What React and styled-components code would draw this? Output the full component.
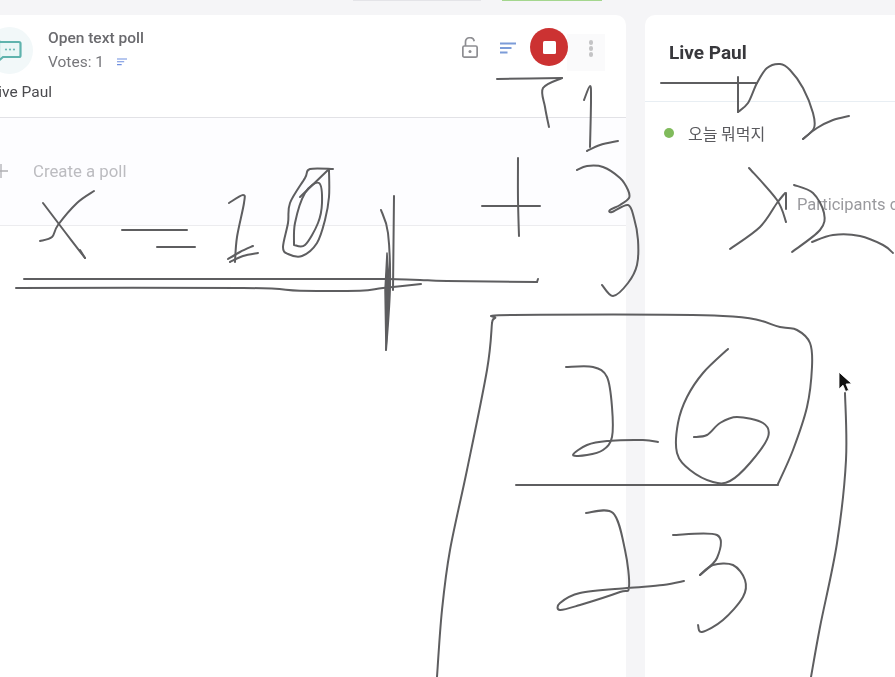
import React from "react";
import styled, { createGlobalStyle } from "styled-components";

const Global = createGlobalStyle`
  html, body { margin: 0; padding: 0; height: 100%; background: #f5f5f7; overflow: hidden; }
  body { font-family: Roboto, "Noto Sans CJK KR", sans-serif; font-size: 15.5px; }
  #root { height: 100%; }
`;

const Page = styled.div`
  position: relative; width: 895px; height: 677px; overflow: hidden; filter: blur(0.35px);
  background: #f5f5f7; display: flex; flex-direction: column;
`;
const TopStrip = styled.div`
  flex: 0 0 15px; display: flex; align-items: flex-start; padding-left: 353px; gap: 21px;
`;
const StripTab = styled.div`
  width: ${p => p.$w}px; height: 1px; background: ${p => p.$c};
`;
const Columns = styled.div`
  flex: 1; display: flex; gap: 19px; margin-left: -30px; width: 1100px; min-height: 0;
`;
const PollPanel = styled.section`
  flex: 0 0 656px; background: #fff; border-radius: 10px 10px 0 0; display: flex; flex-direction: column;
`;
const PollHead = styled.header`
  flex: 0 0 103px; box-sizing: border-box; border-bottom: 1px solid #e2e2e6; padding: 12px 21px 0 16px;
  display: flex; flex-direction: column;
`;
const PollTop = styled.div`
  display: flex; align-items: flex-start; height: 56px;
`;
const Avatar = styled.div`
  flex: 0 0 47px; height: 47px; border-radius: 50%; background: #f2f8f9;
  display: flex; align-items: center; justify-content: center; margin-right: 15px;
`;
const PollInfo = styled.div`
  flex: 1; display: flex; flex-direction: column; gap: 6px; padding-top: 2px;
`;
const PollTitle = styled.div`
  font-weight: 500; color: #6a6a6e; line-height: 18px;
`;
const Votes = styled.div`
  display: flex; align-items: center; gap: 13px; color: #77777b; line-height: 18px;
`;
const Actions = styled.div`
  display: flex; align-items: flex-start; margin-top: 1px;
`;
const LockSlot = styled.span`
  display: flex; margin-right: 22px; margin-top: 9px;
`;
const SortSlot = styled.span`
  display: flex; margin-right: 14px; margin-top: 14px;
`;
const StopButton = styled.button`
  position: relative; z-index: 1; width: 38px; height: 38px; border: 0; padding: 0; border-radius: 50%;
  background: #cc3232; display: flex; align-items: center; justify-content: center;
`;
const StopMark = styled.i`
  display: block; width: 13px; height: 13px; background: #fff; border-radius: 1.5px;
`;
const MoreButton = styled.button`
  width: 38px; height: 37px; margin-left: -1px; margin-top: 6px; border: 0; background: #fafafb; padding: 0 12px 8px 0;
  display: flex; flex-direction: column; align-items: flex-end; justify-content: center; gap: 1.5px;
`;
const Dot3 = styled.i`
  display: block; width: 4.500px; height: 4.500px; border-radius: 50%; background: #c4c4c6;
`;
const PollName = styled.div`
  color: #4a4a4e; line-height: 18px; margin-left: 4px;
`;
const CreateRow = styled.div`
  flex: 0 0 108px; box-sizing: border-box; background: #fdfdff; border-bottom: 1px solid #ececef;
  display: flex; align-items: center; padding: 0 0 2px 24px; gap: 25px; color: #bcbcc0; font-size: 16.800px;
`;
const ParticipantsPanel = styled.section`
  flex: 0 0 400px; background: #fff; border-radius: 10px 10px 0 0; display: flex; flex-direction: column;
`;
const PanelHead = styled.header`
  flex: 0 0 87px; box-sizing: border-box; border-bottom: 1px solid #e8eef3; padding: 27px 24px 0;
  font-size: 19px; line-height: 22px; font-weight: 700; color: #38383c;
`;
const StatusRow = styled.div`
  display: flex; align-items: center; gap: 14px; padding: 22px 0 0 19px; color: #5a5a5e; line-height: 18px;
  font-family: "Noto Sans CJK KR", Roboto, sans-serif; font-size: 16px;
`;
const StatusDot = styled.i`
  display: block; width: 10px; height: 10px; border-radius: 50%; background: #80bb5c;
`;
const Hint = styled.div`
  margin: 54px 0 0 152px; color: #9a9a9e; line-height: 18px; white-space: nowrap; font-size: 16.500px;
`;
const Sketch = styled.svg`
  position: absolute; left: 0; top: 0; width: 895px; height: 677px; pointer-events: none; z-index: 2;
`;

const smooth = pts => {
  let d = `M${pts[0][0]} ${pts[0][1]}`;
  for (let i = 0; i < pts.length - 1; i++) {
    const p0 = pts[i - 1] || pts[i], p1 = pts[i], p2 = pts[i + 1], p3 = pts[i + 2] || p2;
    const c1 = [p1[0] + (p2[0] - p0[0]) / 6, p1[1] + (p2[1] - p0[1]) / 6];
    const c2 = [p2[0] - (p3[0] - p1[0]) / 6, p2[1] - (p3[1] - p1[1]) / 6];
    d += `C${c1[0].toFixed(1)} ${c1[1].toFixed(1)} ${c2[0].toFixed(1)} ${c2[1].toFixed(1)} ${p2[0]} ${p2[1]}`;
  }
  return d;
};

const strokes = [
  [[497,79],[562,78]],
  [[562,78],[543,88],[545,107],[549,127]],
  [[584,100],[590,86],[591,100],[590,147]],
  [[587,151],[600,145],[618,141]],
  [[577,170],[587,166],[603,167],[620,178],[628,190],[629,198],[620,205],[610,210],[612,212],[628,205],[634,218],[638,240],[637,265],[628,283],[613,296],[602,285]],
  [[518,158],[518,200],[519,236]],
  [[482,206],[540,206]],
  [[24,279],[387,279]],
  [[387,279],[420,280],[447,281],[537,282]],
  [[537,282],[538,279]],
  [[16,288],[243,288],[300,290.7],[360,290.7],[383,288],[421,284]],
  [[394,196],[393,290]],
  [[381,210],[388,233],[390,287],[386,350]],
  [[43,203],[65,232],[85,258]],
  [[80,250],[85,258]],
  [[94,191],[77,203],[58,225],[52,237],[40,241]],
  [[122,230],[187,230]],
  [[157,247],[195,247]],
  [[229,203],[243,195],[244,203],[237,237],[235,262]],
  [[228,259],[240,252],[253,246]],
  [[230,262],[243,256],[258,253]],
  [[333,169],[310,169],[305,178],[290,203],[288,223],[283,247],[288,254],[302,256],[317,243],[325,220],[329,197],[329,170]],
  [[294,245],[295,223],[305,193],[319,183],[322,203],[318,223],[305,245],[294,245]],
  [[300,197],[328,170]],
  [[661,83],[757,83]],
  [[738,77],[738,112]],
  [[738,112],[748,103],[757,83],[767,68],[780,64],[790,70],[803,88],[813,113],[814,128],[803,139]],
  [[803,139],[817,128],[833,120],[849,116]],
  [[749,168],[777,200],[786,222]],
  [[785,193],[777,203],[760,227],[730,249]],
  [[786,193],[786,209]],
  [[794,185],[813,193],[824,213],[820,230],[792,252]],
  [[812,242],[833,235],[860,236],[883,245],[893,253]],
  [[492,323],[495,318],[513,315],[723,316],[780,327],[797,330],[810,343],[812,367],[807,407],[793,450],[778,484]],
  [[778,485],[516,485]],
  [[492,323],[487,370],[467,470],[450,550],[442,610],[437,677]],
  [[566,367],[593,367],[607,377],[612,407],[612,437],[603,450],[587,455],[573,455],[587,445],[607,441],[643,440],[658,442]],
  [[728,349],[703,373],[687,397],[678,423],[677,453],[690,470],[713,482],[730,481],[750,463],[768,437],[763,423],[737,417],[720,423],[707,435],[694,437]],
  [[586,513],[613,513],[625,550],[629,587],[620,592],[580,605],[560,610],[560,603],[580,593],[627,588],[663,585],[684,581]],
  [[673,535],[717,535],[717,558],[700,575]],
  [[700,575],[713,565],[733,565],[745,580],[743,597],[723,620],[702,632],[698,625]],
  [[845,393],[846,460],[837,543],[820,627],[811,677]],
];

const ChatIcon = () => (
  <svg width="24" height="22" viewBox="0 0 24 22" fill="none">
    <path d="M3 2h18a1.500 1.500 0 0 1 1.500 1.500v12a1.500 1.500 0 0 1-1.500 1.500H5l-4 3.500V3.500A1.500 1.500 0 0 1 3 2z" fill="#eaf6f6" stroke="#5fb3ad" strokeWidth="2.200" />
    <circle cx="8" cy="9.500" r="1.100" fill="#6fbab5" />
    <circle cx="12" cy="9.500" r="1.100" fill="#6fbab5" />
    <circle cx="16" cy="9.500" r="1.100" fill="#6fbab5" />
  </svg>
);
const SortLines = ({ w, color, sw = 2 }) => (
  <svg width={w} height={w * 0.75} viewBox="0 0 16 12" fill="none" stroke={color} strokeWidth={sw}>
    <path d="M0 1.500h16M0 6h11.500M0 10.500h7.500" />
  </svg>
);
const LockOpen = () => (
  <svg width="16" height="21" viewBox="0 0 16 21" fill="none" stroke="#8e8e92" strokeWidth="1.700">
    <rect x=".85" y="9" width="14.300" height="11.150" rx="1.500" />
    <path d="M3.500 9V5.200a4.400 4.400 0 0 1 8.700-1" />
    <circle cx="8" cy="14.500" r="1.500" fill="#8e8e92" stroke="none" />
  </svg>
);
const PlusMark = () => (
  <svg width="14" height="14" viewBox="0 0 14 14" stroke="#b0b0b4" strokeWidth="1.300">
    <path d="M0 7h14M7 0v14" />
  </svg>
);

export default function App() {
  return (
    <Page>
      <Global />
      <TopStrip>
        <StripTab $w={128} $c="#e4e4e8" />
        <StripTab $w={100} $c="#a4d68e" />
      </TopStrip>
      <Columns>
        <PollPanel>
          <PollHead>
            <PollTop>
              <Avatar><ChatIcon /></Avatar>
              <PollInfo>
                <PollTitle>Open text poll</PollTitle>
                <Votes>Votes: 1 <SortLines w={10} color="#6f8fe0" sw={1.800} /></Votes>
              </PollInfo>
              <Actions>
                <LockSlot><LockOpen /></LockSlot>
                <SortSlot><SortLines w={16} color="#7c9cd8" /></SortSlot>
                <StopButton aria-label="stop"><StopMark /></StopButton>
                <MoreButton aria-label="more"><Dot3 /><Dot3 /><Dot3 /></MoreButton>
              </Actions>
            </PollTop>
            <PollName>Live Paul</PollName>
          </PollHead>
          <CreateRow><PlusMark />Create a poll</CreateRow>
        </PollPanel>
        <ParticipantsPanel>
          <PanelHead>Live Paul</PanelHead>
          <StatusRow><StatusDot />오늘 뭐먹지</StatusRow>
          <Hint>Participants can join</Hint>
        </ParticipantsPanel>
      </Columns>
      <Sketch viewBox="0 0 895 677" fill="none" stroke="#5e5e60" strokeWidth="2" strokeLinecap="round" strokeLinejoin="round">
        {strokes.map((s, i) => <path key={i} d={smooth(s)} />)}
        <path d="M387 253L389.500 287L386 350L385 290z" fill="#5e5e60" strokeWidth="1.500" />
        <path d="M839 372.500v16.500l4-3.800 2.600 6.300 3-1.300-2.600-6.200 5.500-.3z" fill="#111" stroke="#fff" strokeWidth=".8" />
      </Sketch>
    </Page>
  );
}
